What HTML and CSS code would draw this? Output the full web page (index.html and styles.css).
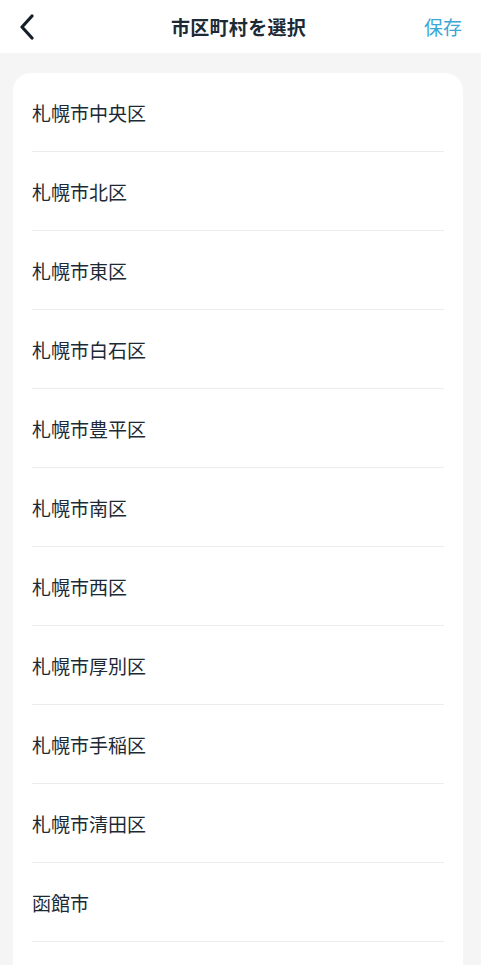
FILE: index.html
```html
<!DOCTYPE html>
<html lang="ja">
<head>
  <meta charset="UTF-8" />
  <title>市区町村を選択</title>
  <link rel="stylesheet" href="styles.css">
</head>
<body>
  <div class="page">
    <!-- ヘッダー -->
    <header class="header">
      <button class="back" aria-label="戻る">
        <svg width="16" height="26" viewBox="0 0 16 26">
          <path d="M13 2 L3 13 L13 24" fill="none" stroke="#15202a" stroke-width="3.2" stroke-linecap="round" stroke-linejoin="round"/>
        </svg>
      </button>
      <h1 class="title">市区町村を選択</h1>
      <a class="save" href="#">保存</a>
    </header>

    <!-- リスト -->
    <div class="content">
      <ul class="city-list">
        <li>札幌市中央区</li>
        <li>札幌市北区</li>
        <li>札幌市東区</li>
        <li>札幌市白石区</li>
        <li>札幌市豊平区</li>
        <li>札幌市南区</li>
        <li>札幌市西区</li>
        <li>札幌市厚別区</li>
        <li>札幌市手稲区</li>
        <li>札幌市清田区</li>
        <li>函館市</li>
      </ul>
    </div>
  </div>
</body>
</html>
```

FILE: styles.css
```css
html, body {
  height: 100%;
  margin: 0;
  padding: 0;
  font-family: "Noto Sans CJK JP", "Noto Sans", sans-serif;
  background: #f5f5f5;
  color: #1c2a35;
  overflow: hidden;
}

.page {
  display: flex;
  flex-direction: column;
  height: 100%;
}

.header {
  height: 53px;
  flex: none;
  background: #fff;
  display: flex;
  align-items: center;
  justify-content: space-between;
  padding: 0 19px 0 19px;
}

.back {
  background: none;
  border: none;
  padding: 0;
  margin-top: 1px;
  width: 40px;
  display: flex;
  align-items: center;
  cursor: pointer;
}

.title {
  margin: 0 0 0 -4px;
  font-size: 19px;
  font-weight: 700;
  color: #1c2a35;
  letter-spacing: 0.3px;
}

.save {
  width: 40px;
  text-align: right;
  font-size: 19px;
  color: #3aa7d6;
  text-decoration: none;
}

.content {
  flex: 1;
  padding: 20px 18px 0 13px;
}

.city-list {
  list-style: none;
  margin: 0;
  padding: 0 19px;
  background: #fff;
  border-radius: 18px 18px 0 0;
  min-height: 100%;
}

.city-list li {
  height: 78px;
  display: flex;
  align-items: center;
  font-size: 19px;
  border-bottom: 1px solid #ececec;
}
```
